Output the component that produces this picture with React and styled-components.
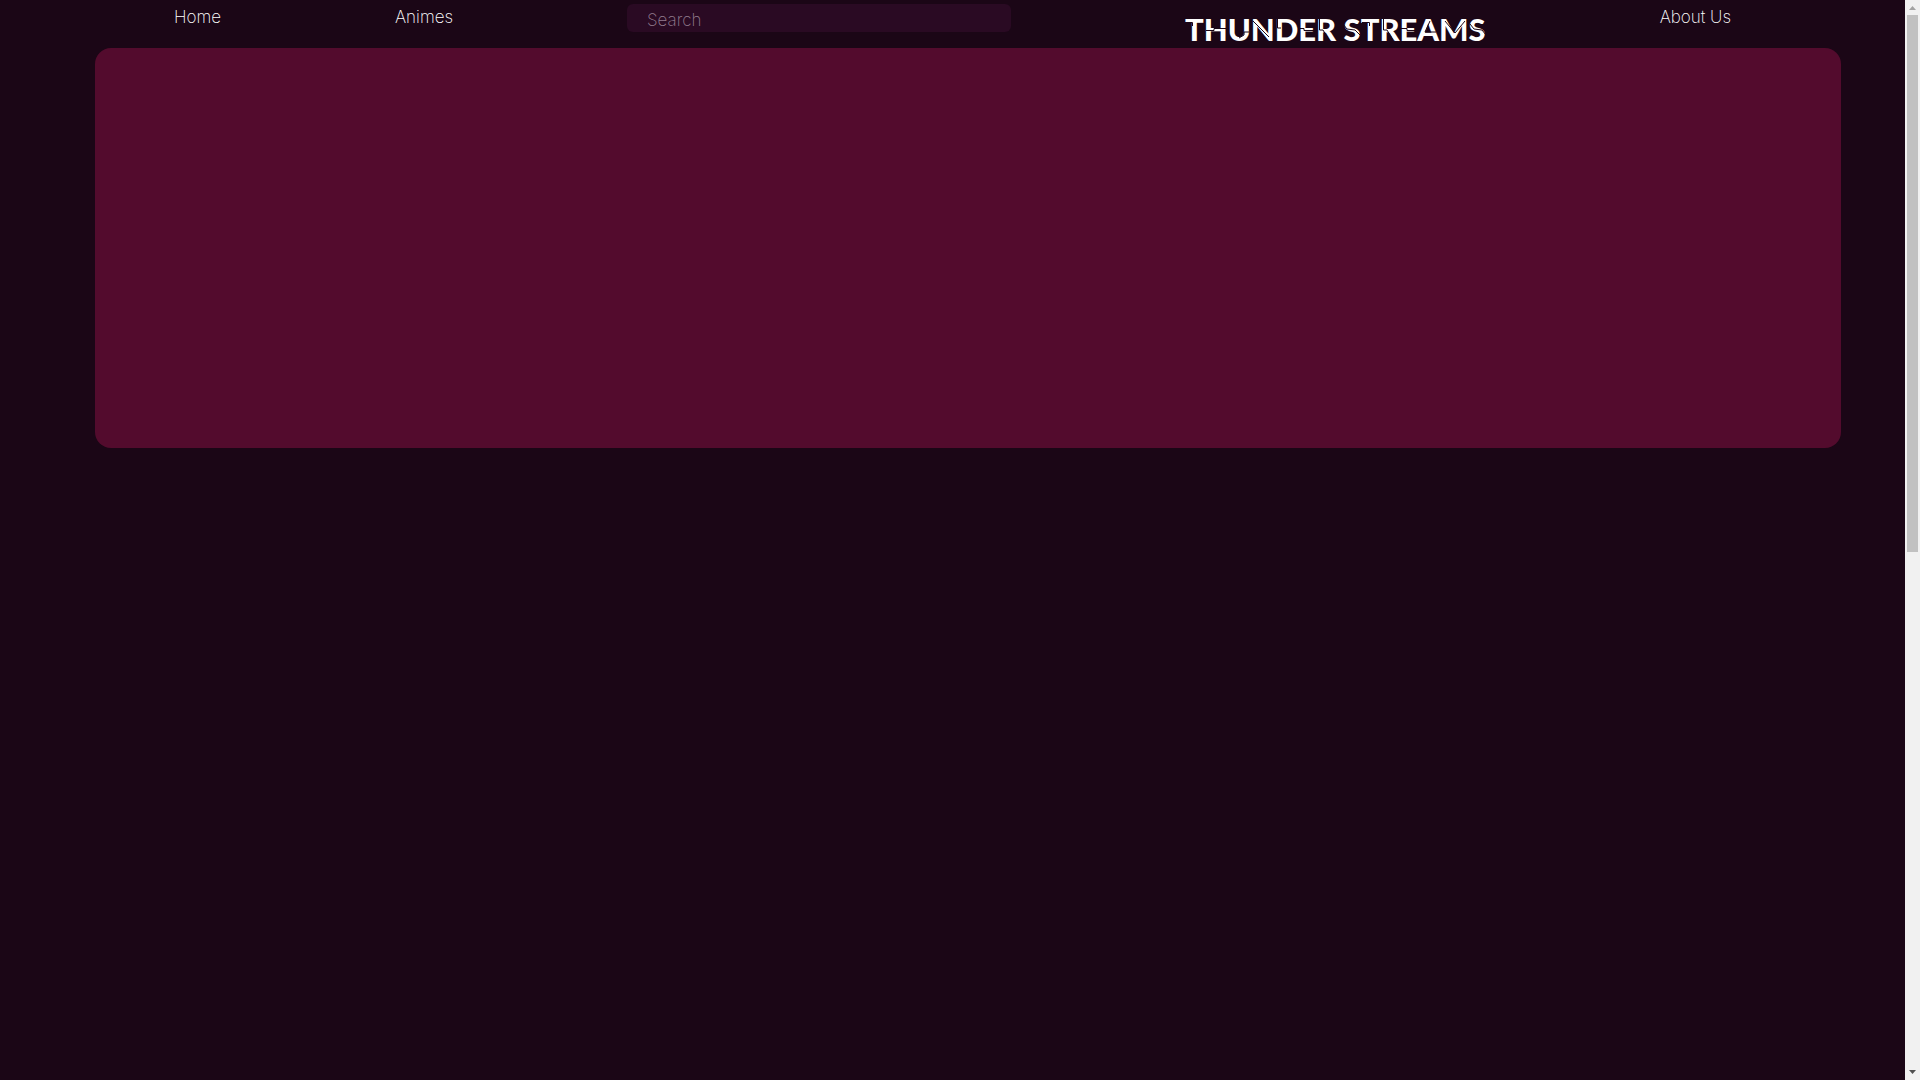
import React from 'react';
import styled, {createGlobalStyle} from 'styled-components';

const GlobalStyle = createGlobalStyle`
    body {
        margin: 0;
        background: #1b0616;
        font-family: Inter, "Liberation Sans", sans-serif;
    }
`

const Layout = styled.div`
    display: flex;
    align-items: flex-start;
`

const Page = styled.main`
    flex: 1;
    min-width: 0;
    min-height: 100vh;
`

const NavBar = styled.nav`
    display: flex;
    justify-content: space-evenly;
    align-items: flex-start;
    height: 48px;
`

const NavLink = styled.a`
    padding-top: 6px;
    color: #fff;
    font-size: 17px;
    font-weight: 200;
    line-height: 22px;
    text-decoration: none;
    white-space: nowrap;
`

const SearchInput = styled.input`
    box-sizing: border-box;
    width: 20vw;
    height: 28px;
    margin-top: 4px;
    padding: 4px 20px 0;
    border: none;
    border-radius: 6px;
    outline: none;
    background: #2a0a23;
    color: #fff;
    font-family: inherit;
    font-size: 17px;
    font-weight: 200;

    &::placeholder {
        color: #947d90;
        opacity: 1;
    }
`

const Logo = styled.a`
    position: relative;
    margin-top: 12px;
    color: #fff;
    font-family: Lato, sans-serif;
    font-size: 31px;
    font-weight: 900;
    line-height: 34px;
    text-decoration: none;
    white-space: nowrap;
`

const LogoCuts = styled.svg`
    position: absolute;
    top: 0;
    left: 0;
    fill: none;
    stroke: #1b0616;
    stroke-width: 1;
`

const Banner = styled.section`
    width: calc(100% - 159px);
    height: 400px;
    margin-left: 5%;
    border-radius: 16px;
    background: #530b2d;
`

const ScrollTrack = styled.div`
    position: sticky;
    top: 0;
    display: flex;
    flex-direction: column;
    width: 15px;
    height: 100vh;
    background: #f1f1f1;
`

const ScrollThumb = styled.div`
    height: calc(50% - 3px);
    margin: 0 2px auto;
    background: #c1c1c1;
`

// thin slits cut through the letters, left to right
const cuts = [
    'M0 10.5H7.5V14',
    'M21 18.5H29V16.5H41',
    'M54 26L59 23V20H64',
    'M68 9L84 25',
    'M92.5 6V16H96',
    'M113 16.5H119V18.5H129',
    'M134.5 6V18H138L144 28',
    'M158 12L162 17L170 18L175 23',
    'M177 10.5H184.5V14',
    'M198.5 6V18H202L208 28',
    'M216 16.5H222V18.5H232',
    'M245 9L240 20H251',
    'M260 9L270 21L280 9',
    'M285 12L289 17L297 18L301 23',
]

const ScrollArrow = ({color, points}) => (
    <svg width="15" height="15" viewBox="0 0 15 15" aria-hidden="true">
        <polygon points={points} fill={color}/>
    </svg>
)

const App = () => (
    <>
        <GlobalStyle/>
        <Layout>
            <Page>
                <NavBar>
                    <NavLink href="#home">Home</NavLink>
                    <NavLink href="#animes">Animes</NavLink>
                    <SearchInput type="search" placeholder="Search" aria-label="Search"/>
                    <Logo href="#home">
                        THUNDER STREAMS
                        <LogoCuts width="304" height="34" viewBox="0 0 304 34" aria-hidden="true">
                            {cuts.map((d) => <path key={d} d={d}/>)}
                        </LogoCuts>
                    </Logo>
                    <NavLink href="#about">About Us</NavLink>
                </NavBar>
                <Banner/>
            </Page>
            <ScrollTrack>
                <ScrollArrow color="#a3a3a3" points="4,10 11,10 7.5,6"/>
                <ScrollThumb/>
                <ScrollArrow color="#505050" points="4,5 11,5 7.5,9"/>
            </ScrollTrack>
        </Layout>
    </>
)

export default App;
